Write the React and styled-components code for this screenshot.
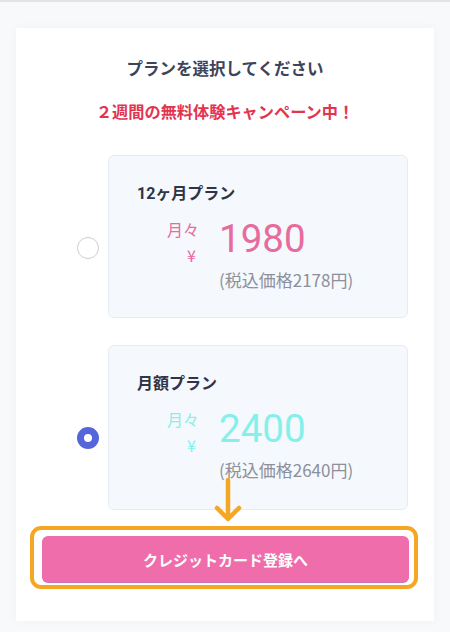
import React, { useState } from "react"
import styled, { createGlobalStyle } from "styled-components"

const GlobalStyle = createGlobalStyle`
    html, body {
        margin: 0;
        padding: 0;
        background: #f8f9fa;
        font-family: "Noto Sans CJK JP", "Noto Sans", sans-serif;
    }
    * {
        box-sizing: border-box;
    }
`

const Page = styled.div`
    width: 450px;
    min-height: 632px;
    border-top: 2px solid #e2e3e5;
    padding: 26px 16px 10px;
`

const Sheet = styled.div`
    background: #ffffff;
    box-shadow: 0 0 10px rgba(0, 0, 0, 0.035);
    padding: 28px 0 32px;
    display: flex;
    flex-direction: column;
`

const Title = styled.h2`
    margin: 0;
    text-align: center;
    font-size: 16.5px;
    line-height: 24px;
    font-weight: 700;
    color: #3d4459;
`

const Campaign = styled.p`
    margin: 19px 0 0;
    text-align: center;
    font-size: 16.2px;
    line-height: 24px;
    font-weight: 700;
    color: #e3344f;
`

const PlanList = styled.ul`
    list-style: none;
    margin: 32px 0 0;
    padding: 0;
    display: flex;
    flex-direction: column;
    gap: 27px;
`

const PlanRow = styled.li`
    display: flex;
    align-items: flex-start;
    padding-left: 61px;
    gap: 9px;
    cursor: pointer;
`

const Radio = styled.span`
    flex: none;
    width: 22px;
    height: 22px;
    margin-top: 82px;
    border-radius: 50%;
    background: #ffffff;
    border: ${p => (p.checked ? "7px solid #5466d9" : "1px solid #cfcfcf")};
`

const PlanCard = styled.div`
    width: 300px;
    background: #f5f8fc;
    border: 1px solid #e7ecf2;
    border-radius: 6px;
    padding: 27px 0 ${p => p.bottom}px 28px;
`

const PlanName = styled.div`
    font-family: Roboto, "Noto Sans CJK JP", sans-serif;
    font-size: 16px;
    line-height: 22px;
    font-weight: 700;
    color: #2f3447;
`

const PriceRow = styled.div`
    display: flex;
    margin-top: 11px;
    gap: 19px;
`

const PerMonth = styled.div`
    width: 63px;
    text-align: right;
    color: ${p => p.color};
    font-size: 16px;
    line-height: 26px;
    padding-right: 1px;

    & > span {
        display: block;
    }
    & > span:last-child {
        font-size: 16px;
        padding-right: 3px;
    }
`

const PriceCol = styled.div`
    display: flex;
    flex-direction: column;
`

const Amount = styled.div`
    font-family: Roboto, sans-serif;
    font-size: 38.5px;
    line-height: 44px;
    margin-top: 1px;
    color: ${p => p.color};
`

const TaxNote = styled.div`
    margin-top: 8px;
    font-size: 17px;
    line-height: 22px;
    color: #8c909a;
`

const ButtonArea = styled.div`
    position: relative;
    margin: 16px 16px 0 14px;
    border: 4px solid #f5a623;
    border-radius: 11px;
    padding: 6px 5px 3px 8px;
`

const Arrow = styled.svg`
    position: absolute;
    left: 180px;
    top: -52px;
`

const SubmitButton = styled.button`
    display: block;
    width: 100%;
    height: 46px;
    border: none;
    border-radius: 6px;
    background: #ef6daa;
    box-shadow: 0 1px 0 #c874b8;
    color: #ffffff;
    font-family: "Noto Sans CJK JP", sans-serif;
    font-size: 15px;
    font-weight: 700;
    cursor: pointer;
`

const plans = [
    {
        id: "year",
        name: "12ヶ月プラン",
        price: "1980",
        tax: "(税込価格2178円)",
        color: "#e76b9c",
        bottom: 26,
    },
    {
        id: "month",
        name: "月額プラン",
        price: "2400",
        tax: "(税込価格2640円)",
        color: "#84f0ec",
        bottom: 28,
    },
]

export default function App() {
    const [selected, setSelected] = useState("month")

    return (
        <>
            <GlobalStyle />
            <Page>
                <Sheet>
                    <Title>プランを選択してください</Title>
                    <Campaign>２週間の無料体験キャンペーン中！</Campaign>
                    <PlanList>
                        {plans.map(plan => (
                            <PlanRow key={plan.id} onClick={() => setSelected(plan.id)}>
                                <Radio checked={selected === plan.id} />
                                <PlanCard bottom={plan.bottom}>
                                    <PlanName>{plan.name}</PlanName>
                                    <PriceRow>
                                        <PerMonth color={plan.color}>
                                            <span>月々</span>
                                            <span>¥</span>
                                        </PerMonth>
                                        <PriceCol>
                                            <Amount color={plan.color}>{plan.price}</Amount>
                                            <TaxNote>{plan.tax}</TaxNote>
                                        </PriceCol>
                                    </PriceRow>
                                </PlanCard>
                            </PlanRow>
                        ))}
                    </PlanList>
                    <ButtonArea>
                        <Arrow width="28" height="44" viewBox="0 0 28 44">
                            <path
                                d="M14 2 V40 M3 30 L14 41 L25 30"
                                fill="none"
                                stroke="#f5a623"
                                strokeWidth="4.5"
                                strokeLinecap="round"
                                strokeLinejoin="round"
                            />
                        </Arrow>
                        <SubmitButton>クレジットカード登録へ</SubmitButton>
                    </ButtonArea>
                </Sheet>
            </Page>
        </>
    )
}
